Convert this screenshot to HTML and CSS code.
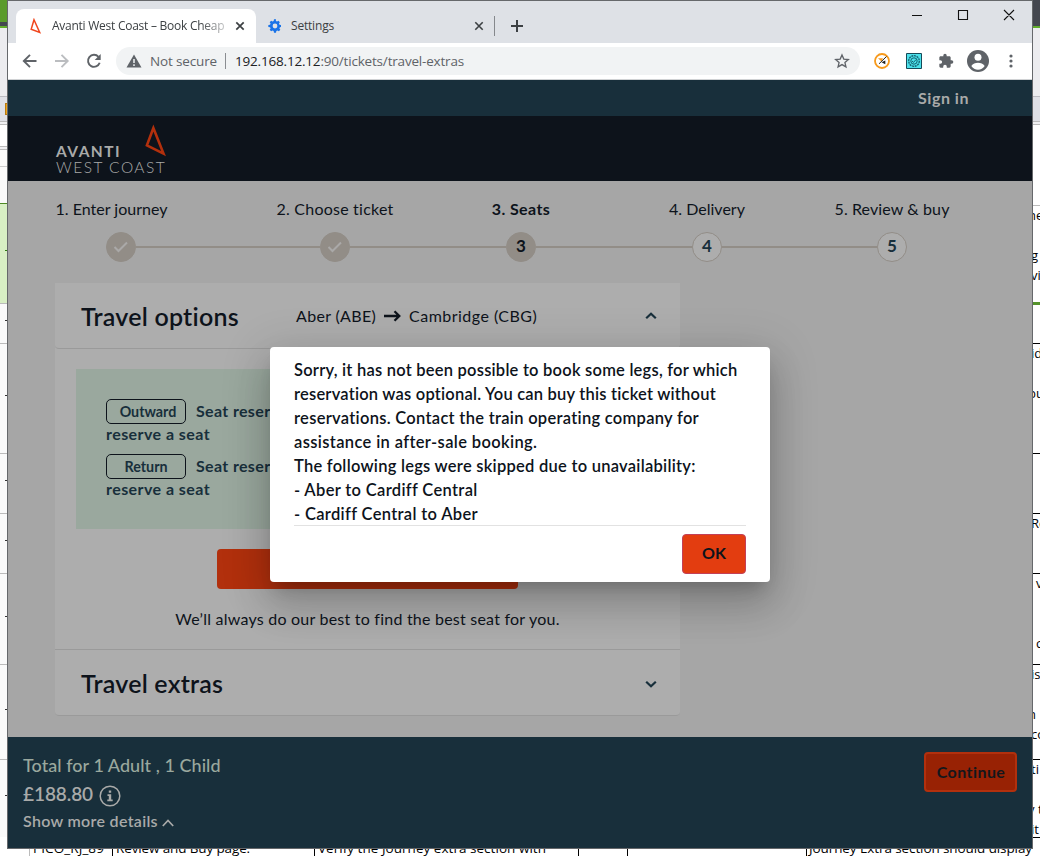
FILE: index.html
```html
<!DOCTYPE html>
<html lang="en">
<head>
<meta charset="utf-8">
<title>Avanti West Coast – Book Cheap</title>
<link rel="stylesheet" href="styles.css">
</head>
<body>
<div class="desktop">
  <div class="strip left">
    <i class="app-top"></i><i class="app-dark"></i><i class="app-line"></i>
    <i class="ribbon"></i><i class="tabs"><b class="folder"></b></i><i class="edge"></i><i class="formula"></i><i class="edge"></i><i class="colhead"></i>
    <i class="row r37"></i><i class="row selected r100"><b></b></i><i class="row r40"><b></b></i><i class="row r110"><b></b></i><i class="row r60"><b></b></i><i class="row r60"><b></b></i><i class="row r91"><b></b></i><i class="row r95"><b></b></i><i class="row r78"><b></b></i>
  </div>
  <div class="strip right">
    <i class="app-bar"></i><i class="app-line"></i>
    <i class="ribbon"></i><i class="tabs"></i><i class="edge"></i>
    <i class="cell c80"></i>
    <i class="cell green c99"><u class="in">ne</u><u>&nbsp;</u><u>g</u><u>vi</u></i>
    <i class="cell black c39"></i>
    <i class="cell black c110"><u>id</u><u>&nbsp;</u><u class="in">bu</u></i>
    <i class="cell black c60"></i>
    <i class="cell black c60"><u>Re</u></i>
    <i class="cell black c91"><u class="out">v</u><u>&nbsp;</u><u>&nbsp;</u><u class="out">c</u></i>
    <i class="cell black c95"><u>is</u><u>&nbsp;</u><u class="in">n</u><u>co</u></i>
    <i class="cell black c78"><u>ti</u><u>&nbsp;</u><u class="in">y t</u><u>it</u></i>
  </div>
  <div class="bottom">
    <span class="b0"></span><span class="b1"><em class="t-b1">PICO_RJ_89</em></span><span class="b2"><em class="t-b2">Review and Buy page.</em></span><span class="b3"><em class="t-b3">Verify the Journey extra section with</em></span><span class="b4"></span><span class="b5"></span><span class="b6"><em class="t-b6">Journey Extra section should display</em></span>
  </div>

  <div class="window">
    <div class="titlebar">
      <div class="tab active">
        <svg class="fav" width="16" height="16" viewBox="0 0 16 16"><path d="M6 1.800 3.200 11.200 11.700 14.400Z" fill="none" stroke="#f0471f" stroke-width="1.500"/></svg>
        <span class="tab-title fade"><em class="t-tab">Avanti West Coast – Book Cheap</em></span>
        <svg class="x1" width="10" height="10" viewBox="0 0 10 10"><path d="M1.300 1.300 8.700 8.700M8.700 1.300 1.300 8.700" stroke="#3c4043" stroke-width="1.700"/></svg>
      </div>
      <div class="tab second">
        <svg class="gear" width="16" height="16" viewBox="0 0 24 24"><path fill="#1a73e8" d="M21 13.500V10.500L18.700 10a7 7 0 0 0-.8-1.800l1.400-2-2.200-2.200-2 1.400a7 7 0 0 0-1.800-.8L13.500 2h-3L10 4.600a7 7 0 0 0-1.800.8l-2-1.400L4 6.200l1.400 2A7 7 0 0 0 4.600 10L2 10.500v3l2.600.5a7 7 0 0 0 .8 1.800l-1.400 2L6.200 20l2-1.400a7 7 0 0 0 1.800.8l.5 2.600h3l.5-2.600a7 7 0 0 0 1.800-.8l2 1.400 2.200-2.200-1.400-2a7 7 0 0 0 .8-1.800zM12 15.600a3.600 3.600 0 1 1 0-7.200 3.600 3.600 0 0 1 0 7.200z"/></svg>
        <em class="t-set">Settings</em>
        <svg class="x2" width="10" height="10" viewBox="0 0 10 10"><path d="M1.300 1.300 8.700 8.700M8.700 1.300 1.300 8.700" stroke="#3c4043" stroke-width="1.600"/></svg>
      </div>
      <svg class="plus" width="14" height="14" viewBox="0 0 14 14"><path d="M7 1v12M1 7h12" stroke="#3c4043" stroke-width="2"/></svg>
      <svg class="winctl" width="104" height="12" viewBox="0 0 104 12"><path d="M0 6.500h10M46.500 1.500h9v9h-9zM92 1l10 10M102 1 92 11" fill="none" stroke="#111" stroke-width="1.100"/></svg>
    </div>
    <div class="toolbar">
      <svg class="nav" width="84" height="16" viewBox="0 0 84 16"><g fill="none" stroke-width="1.900"><path d="M14.500 8H2M8 1.800 1.800 8 8 14.200" stroke="#5f6368"/><path d="M33 8h12.500M39.500 1.800 45.700 8l-6.200 6.200" stroke="#bbbdc0"/><path d="M76.500 3.800A6 6 0 1 0 77.700 9.800" stroke="#5f6368"/></g><path d="M78.700 1v6h-6z" fill="#5f6368"/></svg>
      <div class="omnibox">
        <svg width="16" height="14" viewBox="0 0 16 14"><path d="M8 .5 15.500 13.500H.5z" fill="#5f6368"/><path d="M8 5v4M8 10.300v1.700" stroke="#f1f3f4" stroke-width="1.500"/></svg>
        <em class="t-ns">Not secure</em><i class="sep"></i>
        <em class="t-url"><b>192.168.12.12</b>:90/tickets/travel-extras</em>
        <svg class="star" width="16" height="16" viewBox="0 0 24 24"><path d="m12 3 2.700 6.200 6.800.6-5.100 4.500 1.500 6.600L12 17.400l-5.900 3.500 1.500-6.600L2.500 9.800l6.800-.6z" fill="none" stroke="#5f6368" stroke-width="2"/></svg>
      </div>
      <svg class="ext1" width="16" height="16" viewBox="0 0 16 16"><circle cx="8" cy="8" r="7" fill="#fff" stroke="#f79a1c" stroke-width="1.800"/><path d="M4 5.200h5L7.500 8.500z" fill="#f79a1c"/><path d="m5 10.800 7.500-7.300" stroke="#222"/><path d="M7.500 9.300 11.300 7.500v3.800z" fill="#222"/></svg>
      <svg class="ext2" width="16" height="16" viewBox="0 0 16 16"><path d="M.5.500h15v15H.5z" fill="#4be0ea" stroke="#164a58"/><g fill="none" stroke="#14606f"><circle cx="8" cy="8" r="5.300" stroke-dasharray="2 .7" stroke-width="1.300"/><circle cx="8" cy="8" r="3.200"/><path d="m6 8 1.500 1.400L10 6.600"/></g></svg>
      <svg class="puzzle" width="16" height="16" viewBox="0 0 24 24"><path fill="#5f6368" d="M20.500 11H19V7c0-1.100-.9-2-2-2h-4V3.500a2.500 2.500 0 0 0-5 0V5H4c-1.100 0-2 .9-2 2v3.800h1.500a2.700 2.700 0 0 1 0 5.400H2V20c0 1.100.9 2 2 2h3.800v-1.500a2.700 2.700 0 0 1 5.400 0V22H17c1.100 0 2-.9 2-2v-4h1.500a2.500 2.500 0 0 0 0-5z"/></svg>
      <svg class="user" width="22" height="22" viewBox="0 0 22 22"><circle cx="11" cy="11" r="11" fill="#5f6368"/><circle cx="11" cy="7.200" r="3.500" fill="#fff"/><path d="M4.300 16c1.500-2.400 4-3.300 6.700-3.300s5.200.9 6.700 3.300a8 8 0 0 1-13.400 0z" fill="#fff"/></svg>
      <svg class="dots" width="4" height="14" viewBox="0 0 4 14"><g fill="#5f6368"><circle cx="2" cy="2" r="1.600"/><circle cx="2" cy="7" r="1.600"/><circle cx="2" cy="12" r="1.600"/></g></svg>
    </div>

    <div class="page">
      <div class="signin"><em class="t-sign">Sign in</em></div>
      <div class="brand">
        <div class="words"><em class="t-av">AVANTI</em><em class="t-wc">WEST COAST</em></div>
        <svg class="tri" width="24" height="34" viewBox="0 0 24 34"><path d="M9.400 5 2.900 22.300 19.500 30.600Z" fill="none" stroke="#b2300d" stroke-width="2.600" stroke-miterlimit="8"/></svg>
      </div>
      <div class="main">
        <div class="labels"><span class="first"><em class="t-s1">1. Enter journey</em></span><span><em class="t-s2">2. Choose ticket</em></span><span><em class="t-s3">3. Seats</em></span><span><em class="t-s4">4. Delivery</em></span><span><em class="t-s5">5. Review &amp; buy</em></span></div>
        <div class="track">
          <b class="dot done"><svg width="16" height="12" viewBox="0 0 16 12"><path d="m1.500 6 4 4 8.500-8.500" fill="none" stroke="#aaa9a8" stroke-width="2"/></svg></b><i></i>
          <b class="dot done"><svg width="16" height="12" viewBox="0 0 16 12"><path d="m1.500 6 4 4 8.500-8.500" fill="none" stroke="#aaa9a8" stroke-width="2"/></svg></b><i></i>
          <b class="dot now">3</b><i></i><b class="dot">4</b><i class="short"></i><b class="dot">5</b>
        </div>
        <div class="card">
          <div class="head">
            <h2><em class="t-h1">Travel options</em></h2>
            <div class="route"><em class="t-r1">Aber (ABE)</em><svg width="17" height="12" viewBox="0 0 17 12"><path d="M0 6h15M10.500 1.200 15.300 6l-4.800 4.800" fill="none" stroke="#0d131b" stroke-width="2.300"/></svg><em class="t-r2">Cambridge (CBG)</em></div>
            <svg class="chev" width="12" height="8" viewBox="0 0 12 8"><path d="m1.200 6.300 4.800-4.600 4.800 4.600" fill="none" stroke="#182f3b" stroke-width="2.200"/></svg>
          </div>
          <div class="body">
            <div class="notice">
              <div class="leg"><span class="tag l"><em class="t-out">Outward</em></span><em class="t-seat">Seat reser</em></div>
              <div class="sub"><em class="t-res">reserve a seat</em></div>
              <div class="leg two"><span class="tag"><em class="t-ret">Return</em></span><em class="t-seat">Seat reser</em></div>
              <div class="sub"><em class="t-res">reserve a seat</em></div>
            </div>
            <div class="cta"></div>
            <p><em class="t-we">We’ll always do our best to find the best seat for you.</em></p>
          </div>
          <div class="head extras">
            <h2><em class="t-h2">Travel extras</em></h2>
            <svg class="chev" width="12" height="8" viewBox="0 0 12 8"><path d="m1.200 1.700 4.800 4.600 4.800-4.600" fill="none" stroke="#182f3b" stroke-width="2.200"/></svg>
          </div>
        </div>
      </div>
      <div class="footer">
        <div class="sum">
          <div class="tot"><em class="t-tot">Total for 1 Adult , 1 Child</em></div>
          <div class="price"><em class="t-pr">£188.80</em><svg width="22" height="22" viewBox="0 0 22 22"><circle cx="11" cy="11" r="9.800" fill="none" stroke="#a9aaa9" stroke-width="1.500"/><path d="M9.800 5.500h2.400v2.200H9.800zM8.500 9.300h3.700v5.300h1.500v1.600H8.300v-1.600h1.500v-3.700H8.500z" fill="#a9aaa9"/></svg></div>
          <div class="more"><em class="t-mo">Show more details</em><svg width="12" height="8" viewBox="0 0 12 8"><path d="m.8 7 5.200-5.500L11.200 7" fill="none" stroke="#a9aaa9" stroke-width="1.700"/></svg></div>
        </div>
        <div class="continue"><em class="t-co">Continue</em></div>
      </div>
    </div>

    <div class="modal">
      <div class="msg"><em class="t-m1">Sorry, it has not been possible to book some legs, for which</em><em class="t-m2">reservation was optional. You can buy this ticket without</em><em class="t-m3">reservations. Contact the train operating company for</em><em class="t-m4">assistance in after-sale booking.</em><em class="t-m5">The following legs were skipped due to unavailability:</em><em class="t-m6">- Aber to Cardiff Central</em><em class="t-m6">- Cardiff Central to Aber</em></div>
      <div class="actions"><div class="ok"><em>OK</em></div></div>
    </div>
  </div>
</div>
</body>
</html>
```
FILE: styles.css
```css
body { margin: 0; background: #fff; }
em, u, i { font-style: normal; text-decoration: none; }
em { white-space: pre; display: inline-block; }
svg { display: block; flex: none; }
.desktop { position: relative; width: 1040px; height: 856px; overflow: hidden; background: #fff; font-family: "Open Sans", sans-serif; }

/* spreadsheet behind the browser window */
.strip { position: absolute; top: 0; width: 8px; height: 856px; overflow: hidden; display: flex; flex-direction: column; background: #fff; }
.strip i { display: block; flex: none; box-sizing: border-box; }
.left { left: 0; background: #fafafa; }
.right { left: 1032px; }
.app-top { height: 22px; background: #5a9b2b; }
.app-dark { height: 4px; background: #44474f; }
.app-bar { height: 26px; background: #44474f; }
.app-line { height: 2px; background: #62ad2c; }
.ribbon { height: 69px; background: #ececef; border-bottom: 1px solid #bcbcc2; }
.tabs { height: 25px; background: #dfe0e6; border-bottom: 1px solid #bbb; padding-top: 6px; }
.folder { display: block; margin-left: 5px; width: 3px; height: 12px; box-sizing: border-box; border: 1px solid #b77a10; background: #eda61c; }
.edge { height: 3px; background: #f0f0f2; border-bottom: 1px solid #bbb; }
.formula { height: 22px; background: #fff; border-bottom: 1px solid #bbb; }
.colhead { height: 17px; border-bottom: 1px solid #ccc; }
.strip .row { border-bottom: 1px solid #bbb; display: flex; align-items: center; }
.row b { margin: -6px 0 0 5px; height: 1px; width: 2px; background: #333; }
.strip .r37 { height: 37px; border-bottom-color: #4e8a24; }
.selected { background: #d8efc4; }
.selected b { background: #2f7d12; }
.r100 { height: 100px; } .r40 { height: 40px; } .r110 { height: 110px; } .r60 { height: 60px; } .r91 { height: 91px; } .r95 { height: 95px; } .r78 { height: 78px; }
.cell { border-bottom: 1px solid #bbb; }
.cell u { display: block; font-size: 13px; line-height: 20px; white-space: nowrap; margin: -1px 0 1px -1px; }
.cell .out { margin-left: 4px; }
.cell .in { margin-left: -4px; }
.green { border-bottom: 3px solid #55932b; }
.black { border-bottom-color: #000; }
.c80 { height: 81px; } .c99 { height: 99px; } .c39 { height: 39px; } .c110 { height: 110px; } .c60 { height: 60px; } .c91 { height: 91px; } .c95 { height: 95px; } .c78 { height: 78px; }
.bottom { position: absolute; left: 0; top: 837px; width: 1033px; height: 19px; overflow: hidden; display: flex; font-size: 13.500px; background: #fff; }
.bottom span { box-sizing: border-box; border-right: 1px solid #000; padding-left: 3px; flex: none; }
.bottom em { line-height: 22px; }
.bottom .b0 { width: 30px; border-color: #bbb; }
.b1 { width: 83px; } .b2 { width: 202px; } .b3 { width: 264px; } .b4 { width: 49px; } .b5 { width: 179px; }
.bottom .b6 { width: 226px; border: 0; padding-left: 2px; }
.t-b1 { letter-spacing: .087px; } .t-b2 { letter-spacing: -.133px; } .t-b3 { letter-spacing: .033px; } .t-b6 { letter-spacing: -.098px; }

/* browser window */
.window { position: absolute; left: 7px; top: 0; width: 1026px; height: 849px; box-sizing: border-box; border: 1px solid #66686b; background: #a6a6a6; display: flex; flex-direction: column; }
.titlebar { height: 42px; background: #dee1e6; display: flex; flex: none; }
.tab { display: flex; align-items: center; font-size: 12px; color: #3c4043; }
.active { margin: 8px 0 0 8px; width: 240px; height: 34px; background: #fff; border-radius: 8px 8px 0 0; box-sizing: border-box; padding-left: 12px; }
.tab em { padding-bottom: 1px; }
.tab-title { margin-left: 8px; width: 174px; overflow: hidden; }
.t-tab { letter-spacing: -.255px; }
.t-set { letter-spacing: -.188px; }
.fade { -webkit-mask-image: linear-gradient(90deg, #000 85%, rgba(0,0,0,.25)); mask-image: linear-gradient(90deg, #000 85%, rgba(0,0,0,.25)); }
.x1 { margin-left: 9px; }
.second { box-sizing: border-box; width: 239px; height: 20px; margin-top: 15px; padding-left: 11px; border-right: 1px solid #85888c; }
.second em { margin-left: 8px; }
.x2 { margin-left: auto; margin-right: 10px; }
.plus { margin: 18px 0 0 15px; }
.winctl { margin: 8px 16px 0 auto; }
.toolbar { height: 37px; box-sizing: border-box; background: #fff; border-bottom: 1px solid #d0d2d4; display: flex; align-items: center; flex: none; padding-left: 14px; }
.omnibox { margin-left: 10px; width: 744px; height: 28px; border-radius: 14px; background: #f1f3f4; box-sizing: border-box; padding: 0 10px; display: flex; align-items: center; font-size: 13.500px; color: #5f6368; }
.omnibox .t-ns { margin-left: 8px; letter-spacing: -.147px; }
.omnibox .t-url { margin-left: 9px; letter-spacing: -.188px; }
.sep { width: 1px; height: 16px; background: #8a8d91; margin-left: 8px; }
.t-url b { font-weight: 400; color: #202124; }
.star { margin-left: auto; }
.ext1 { margin-left: 14px; } .ext2 { margin-left: 16px; } .puzzle { margin-left: 16px; } .user { margin-left: 13px; } .dots { margin-left: 20px; }

/* page */
.page { flex: 1; display: flex; flex-direction: column; font-family: Lato, sans-serif; color: #0d131b; font-size: 16px; }
.signin { height: 36px; background: #182f3b; color: #a9aaa9; font-weight: 700; line-height: 35px; text-align: right; padding-right: 63px; letter-spacing: .53px; }
.brand { height: 65px; background: #0d131b; color: #a9aaa9; display: flex; padding-left: 48px; }
.words { display: flex; flex-direction: column; width: 88px; padding-top: 27px; font-size: 15.500px; line-height: 16px; }
.words em { width: max-content; }
.t-av { font-weight: 700; letter-spacing: 1.45px; }
.t-wc { font-weight: 300; letter-spacing: 1.470px; }
.tri { margin-top: 7px; }
.main { height: 556px; }
.labels { display: flex; padding: 17px 0 0 20px; line-height: 22px; }
.labels span { width: 186px; text-align: center; }
.labels .first { box-sizing: border-box; padding-right: 19px; margin-right: 28px; }
.t-s2 { letter-spacing: .22px; }
.t-s3 { font-weight: 700; letter-spacing: .4px; }
.t-s5 { letter-spacing: .11px; margin-left: -2px; }
.track { display: flex; align-items: center; margin: 12px 0 0 98px; width: 801px; height: 30px; }
.track i { width: 156px; height: 2px; background: #928d87; }
.track i:nth-of-type(1) { width: 184px; }
.track .short { width: 155px; }
.dot { width: 30px; height: 30px; flex: none; box-sizing: border-box; border: 1px solid #928d87; border-radius: 15px; background: #adadad; display: flex; align-items: center; justify-content: center; color: #182f3b; font-size: 17px; line-height: 26px; padding-bottom: 2px; }
.done, .now { background: #928d87; }
.done { padding: 0; }
.now { color: #0d131b; }
.card { margin: 21px 0 0 47px; width: 625px; background: #adadad; border-radius: 0 0 4px 4px; }
.head { display: flex; align-items: center; box-sizing: border-box; height: 66px; border-bottom: 1px solid #9a9a9a; padding: 0 23px 0 26px; border-radius: 0 0 4px 4px; }
h2 { margin: 0; font-size: 25px; font-weight: 600; width: 215px; line-height: 30px; }
.t-h1 { letter-spacing: .23px; }
.t-h2 { letter-spacing: .22px; }
.route { display: flex; align-items: center; }
.route svg { margin: 0 8px; }
.t-r1 { letter-spacing: .33px; }
.t-r2 { letter-spacing: .47px; }
.chev { margin-left: auto; }
.body { height: 301px; box-sizing: border-box; border-bottom: 1px solid #9a9a9a; padding: 20px 21px 0; }
.notice { height: 160px; box-sizing: border-box; background: #9aa89e; padding: 30px; color: #182f3b; font-weight: 700; }
.leg { display: flex; align-items: center; height: 25px; }
.two { margin-top: 7px; }
.tag { width: 80px; height: 25px; box-sizing: border-box; border: 1px solid #0d131b; border-radius: 5px; text-align: center; margin-right: 10px; font-size: 14.300px; line-height: 24px; font-weight: 700; }
.tag.l { padding-left: 4px; }
.t-seat { letter-spacing: .35px; padding-bottom: 2px; }
.t-res { letter-spacing: .43px; }
.sub { line-height: 20px; padding-bottom: 3px; }
.cta { margin: 20px 0 0 141px; width: 301px; height: 40px; border-radius: 4px; background: #b2300d; }
.body p { margin: 19px 0 0; text-align: center; line-height: 22px; letter-spacing: .224px; }
.extras { height: 66px; }
.extras .chev { margin-top: 2px; }
.footer { height: 111px; background: #182f3b; color: #a9aaa9; display: flex; justify-content: space-between; box-sizing: border-box; padding: 15px 15px 0; }
.tot { font-size: 18px; line-height: 26px; color: #9aa89e; font-weight: 500; letter-spacing: .04px; }
.price { display: flex; align-items: center; height: 32px; font-size: 19px; gap: 6px; font-weight: 600; }
.t-pr { line-height: 24px; letter-spacing: -.08px; }
.price svg { margin-top: 3px; }
.more { display: flex; align-items: center; gap: 4px; font-size: 16px; line-height: 22px; font-weight: 600; letter-spacing: .31px; }
.more svg { margin-top: 3px; }
.continue { width: 93px; height: 40px; box-sizing: border-box; border: 2px solid #b2300d; background: #982204; border-radius: 4px; text-align: center; line-height: 36px; color: #14171c; font-weight: 700; letter-spacing: .45px; padding-left: 1px; }

.modal { position: absolute; left: 262px; top: 346px; width: 500px; height: 235px; box-sizing: border-box; padding: 11px 24px 0; background: #fff; border-radius: 4px; color: #0d131b; font-family: Lato, sans-serif; font-weight: 600; font-size: 16.500px; box-shadow: 0 11px 15px -7px rgba(0,0,0,.2), 0 24px 38px 3px rgba(0,0,0,.14), 0 9px 46px 8px rgba(0,0,0,.12); }
.msg { display: flex; flex-direction: column; align-items: flex-start; line-height: 24px; height: 167px; border-bottom: 1px solid #e2e2e2; }
.t-m1 { letter-spacing: .222px; } .t-m2 { letter-spacing: .21px; } .t-m3 { letter-spacing: .29px; } .t-m4 { letter-spacing: .36px; } .t-m5 { letter-spacing: .255px; } .t-m6 { letter-spacing: .33px; }
.actions { display: flex; justify-content: flex-end; padding-top: 8px; }
.ok { width: 64px; height: 40px; box-sizing: border-box; border: 1px solid #c24058; border-radius: 4px; background: #e33d10; text-align: center; line-height: 36px; font-size: 16px; font-weight: 700; }
```
